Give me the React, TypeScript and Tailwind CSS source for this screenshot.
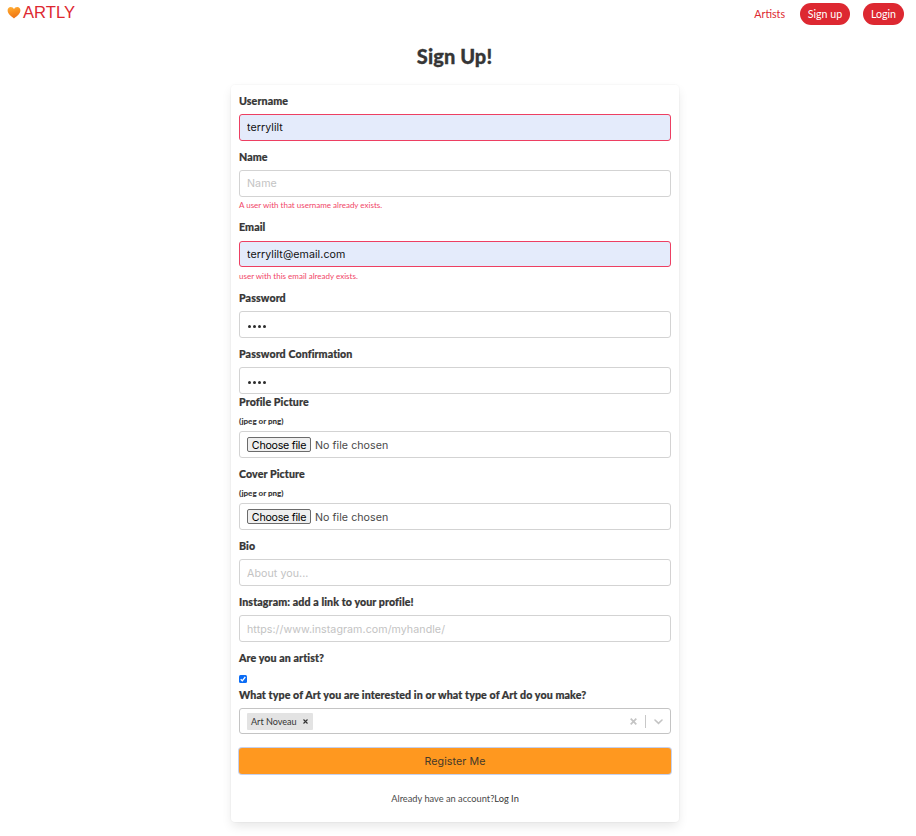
import React from "react";

const sans = "font-['Inter','Liberation_Sans',sans-serif]";

function Label({ children, className = "" }: { children: React.ReactNode; className?: string }) {
  return (
    <label className={`block h-4 text-[10.67px] leading-4 font-black tracking-[0.09px] text-[#363636] [-webkit-text-stroke:0.2px_#363636] ${className}`}>
      {children}
    </label>
  );
}

function Field({
  value,
  placeholder,
  invalid = false,
  size = "mt-[5px] h-[27px]",
}: {
  value?: string;
  placeholder?: string;
  invalid?: boolean;
  size?: string;
}) {
  return (
    <input
      type="text"
      defaultValue={value}
      placeholder={placeholder}
      className={`block w-full rounded-[3px] border px-[7px] text-[10.67px] tracking-[0.06px] outline-none placeholder:text-[#c3c3c3] ${size} ${sans} ${
        invalid ? "border-[#ed3f62] bg-[#e4ebfb] text-[#111]" : "border-[#d3d3d3] bg-white text-[#363636]"
      }`}
    />
  );
}

function Dots() {
  return (
    <div className="mt-[5px] flex h-[27px] items-center gap-[2px] rounded-[3px] border border-[#d3d3d3] pt-[3px] pl-2">
      {[0, 1, 2, 3].map((i) => (
        <span key={i} className="size-[3px] rounded-full bg-[#2b2b2b]" />
      ))}
    </div>
  );
}

function FilePicker() {
  return (
    <>
      <div className="mt-[5px] h-3 text-[8px] leading-3 font-black text-[#363636]">(jpeg or png)</div>
      <div className={`mt-1 flex h-[27px] items-center rounded-[3px] border border-[#d3d3d3] px-[7px] text-[10.67px] ${sans}`}>
        <button className="h-[15px] w-16 rounded-[2px] border border-[#6b6b6b] bg-[#efefef] pt-px text-center leading-[13px] tracking-[-0.25px] whitespace-nowrap text-black">
          Choose file
        </button>
        <span className="ml-1 pt-[2px] tracking-[0.05px] text-[#4a4a4a]">No file chosen</span>
      </div>
    </>
  );
}

function Help({ children }: { children: React.ReactNode }) {
  return <p className="mt-[2px] h-3 text-[8px] leading-3 text-[#f14668]">{children}</p>;
}

function Heart() {
  return (
    <svg width="14" height="13" viewBox="0 0 14 13" className="mb-px shrink-0">
      <defs>
        <linearGradient id="heart" x1="0" y1="0" x2="0.3" y2="1">
          <stop offset="0" stopColor="#ffb13c" />
          <stop offset="0.5" stopColor="#f9921f" />
          <stop offset="1" stopColor="#ee7618" />
        </linearGradient>
      </defs>
      <path
        d="M7 12.4C5.2 10.8.6 8.3.6 4.2.6 2.3 1.9 1 3.7 1 5.2 1 6.4 1.9 7 3.2 7.6 1.9 8.8 1 10.3 1c1.8 0 3.1 1.3 3.1 3.2 0 4.1-4.6 6.6-6.4 8.2z"
        fill="url(#heart)"
      />
    </svg>
  );
}

export default function App() {
  return (
    <div className="h-[836px] w-full overflow-hidden bg-white font-['Lato',sans-serif] text-[#4a4a4a]">
      <nav className="flex h-7 items-center justify-between pr-3 pl-[7px]">
        <div className="mb-[2px] flex items-center gap-[2px] font-['Liberation_Sans',sans-serif] text-[16.6px] leading-6 text-[#dd2831]">
          <Heart />
          <span>ARTLY</span>
        </div>
        <div className="flex items-center text-[10.67px] text-[#dd2831]">
          <a className="mr-[15px]">Artists</a>
          <a className="mr-[13px] flex h-[22px] w-[50px] items-center justify-center rounded-full bg-[#dd2831] text-white">Sign up</a>
          <a className="flex h-[22px] w-[41px] items-center justify-center rounded-full bg-[#dd2831] text-white">Login</a>
        </div>
      </nav>
      <h1 className="mt-4 mb-[17px] h-6 pr-[7px] text-center text-[20px] leading-6 font-black tracking-[0.1px] text-[#363636] [-webkit-text-stroke:0.3px_#363636]">
        Sign Up!
      </h1>
      <form className="ml-[231px] h-[737px] w-[448px] rounded-[4px] bg-white p-2 shadow-[0_5px_11px_-1px_rgba(10,10,10,0.1),0_0_0_1px_rgba(10,10,10,0.02)]">
        <Label>Username</Label>
        <Field value="terrylilt" invalid />
        <Label className="mt-2">Name</Label>
        <Field placeholder="Name" />
        <Help>A user with that username already exists.</Help>
        <Label className="mt-2">Email</Label>
        <Field value="terrylilt@email.com" invalid size="mt-[6px] h-[26px] pt-px" />
        <div className="pt-px">
          <Help>user with this email already exists.</Help>
        </div>
        <Label className="mt-2">Password</Label>
        <Dots />
        <Label className="mt-2">Password Confirmation</Label>
        <Dots />
        <Label>Profile Picture</Label>
        <FilePicker />
        <Label className="mt-2">Cover Picture</Label>
        <FilePicker />
        <Label className="mt-2">Bio</Label>
        <Field placeholder="About you..." size="mt-[5px] h-[27px] pt-[2px]" />
        <Label className="mt-2">Instagram: add a link to your profile!</Label>
        <Field placeholder="https://www.instagram.com/myhandle/" size="mt-[5px] h-[27px] pt-[2px]" />
        <Label className="mt-2">Are you an artist?</Label>
        <div className="mt-[9px] flex size-2 items-center justify-center rounded-[1.5px] bg-[#0b6cf5]">
          <svg width="8" height="8" viewBox="0 0 8 8" fill="none" stroke="#fff" strokeWidth="1.3">
            <path d="M1.7 4.2 3.3 5.8 6.3 2" />
          </svg>
        </div>
        <Label className="mt-1">What type of Art you are interested in or what type of Art do you make?</Label>
        <div className="mt-[5px] flex h-[26px] items-center rounded-[3px] border border-[#c4c4c4] pl-[7px]">
          <div className="flex h-[17px] w-[66px] items-center rounded-[1px] bg-[#e3e3e3] pl-1 text-[9.07px] text-[#333]">
            <span className="pt-px whitespace-nowrap">Art Noveau</span>
            <svg width="5" height="5" viewBox="0 0 5 5" stroke="#333" strokeWidth="1.1" className="ml-[6px] shrink-0">
              <path d="M.5.5 4.5 4.5M4.5.5.5 4.5" />
            </svg>
          </div>
          <svg width="7" height="7" viewBox="0 0 7 7" stroke="#c4c4c4" strokeWidth="1.7" className="mt-px mr-2 ml-auto">
            <path d="M.7.7 6.3 6.3M6.3.7.7 6.3" />
          </svg>
          <span className="h-[13px] w-px bg-[#c8c8c8]" />
          <svg width="9" height="6" viewBox="0 0 9 6" fill="none" stroke="#c4c4c4" strokeWidth="1.6" strokeLinecap="round" className="mt-px mr-[7px] ml-2">
            <path d="M1 1 4.5 4.4 8 1" />
          </svg>
        </div>
        <button
          className={`mt-[14px] block h-[26px] w-full rounded-[3px] bg-[#ff981f] pt-[2px] text-[10.67px] tracking-[0.1px] text-[#45392a] shadow-[0_0_0_1px_#c5d0ed] ${sans}`}
        >
          Register Me
        </button>
        <p className="mt-[17px] text-center text-[9.25px] leading-4">
          Already have an account?<a className="text-[#363636]">Log In</a>
        </p>
      </form>
    </div>
  );
}
